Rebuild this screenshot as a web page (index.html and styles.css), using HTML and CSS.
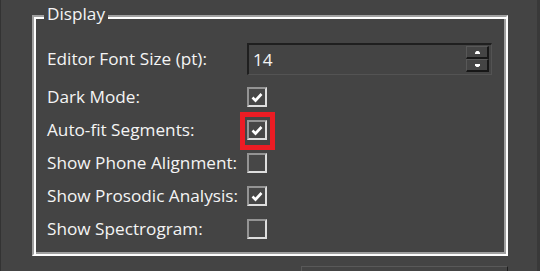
FILE: index.html
```html
<!DOCTYPE html>
<html>
    <head>
        <title> Preferences </title>
        <link rel="stylesheet" href="styles.css">
    </head>
    <body>
        <div class="window">
            <fieldset class="group">
                <legend class="group-title">Display</legend>

                <div class="form">
                    <span class="field-label spin-label">Editor Font Size (pt):</span>
                    <div class="spinbox">
                        <span class="spin-value">14</span>
                        <div class="spin-buttons">
                            <span class="spin-btn">
                                <svg width="5" height="3" viewBox="0 0 5 3"><polygon points="1.5,0 3.5,0 5,1.5 5,3 0,3 0,1.5" fill="#fff"/></svg>
                            </span>
                            <span class="spin-btn">
                                <svg width="5" height="3" viewBox="0 0 5 3"><polygon points="0,0 5,0 5,1.5 3.5,3 1.5,3 0,1.5" fill="#fff"/></svg>
                            </span>
                        </div>
                    </div>

                    <span class="field-label">Dark Mode:</span>
                    <span class="check-cell">
                        <span class="checkbox">
                            <svg width="16" height="16" viewBox="0 0 16 16"><polyline points="3.5,8.5 6.5,11.5 12.5,5" class="tick"/></svg>
                        </span>
                    </span>

                    <span class="field-label">Auto-fit Segments:</span>
                    <span class="check-cell">
                        <span class="checkbox">
                            <svg width="16" height="16" viewBox="0 0 16 16"><polyline points="3.5,8.5 6.5,11.5 12.5,5" class="tick"/></svg>
                        </span>
                        <span class="highlight"></span>
                    </span>

                    <span class="field-label">Show Phone Alignment:</span>
                    <span class="check-cell">
                        <span class="checkbox"></span>
                    </span>

                    <span class="field-label">Show Prosodic Analysis:</span>
                    <span class="check-cell">
                        <span class="checkbox">
                            <svg width="16" height="16" viewBox="0 0 16 16"><polyline points="3.5,8.5 6.5,11.5 12.5,5" class="tick"/></svg>
                        </span>
                    </span>

                    <span class="field-label">Show Spectrogram:</span>
                    <span class="check-cell">
                        <span class="checkbox"></span>
                    </span>
                </div>
            </fieldset>

            <div class="footer">
                <div class="footer-box"></div>
            </div>
        </div>
    </body>
</html>
```

FILE: styles.css
```css
body{
    margin:0;
    background-color:#444444;
    color:#f4f4f4;
    font-family:"Open Sans", "Noto Sans", sans-serif;
    font-size:17.2px;
}

.window{
    box-sizing:border-box;
    width:540px;
    height:271px;
    overflow:hidden;
    padding:3px 0 0 31px;
    background-color:#444444;
    border-left:1px solid #333333;
    border-right:3px solid #393939;
}

.group{
    box-sizing:border-box;
    width:476px;
    margin:0;
    padding:14px 0 9px 0;
    border:2px solid;
    border-color:#a0a0a0 #ffffff #ffffff #a0a0a0;
    box-shadow:inset 2px 2px 0 #ffffff, inset -2px -2px 0 #a0a0a0;
}

.group-title{
    margin-left:10px;
    padding:0 3px 4px 3px;
    line-height:22px;
    background-color:#444444;
}

.form{
    display:grid;
    grid-template-columns:200px 245px;
    grid-template-rows:37px repeat(5, 33px);
    align-items:center;
    padding-left:13px;
}

.spin-label{
    align-self:start;
    line-height:32px;
}

.spinbox{
    align-self:start;
    display:flex;
    box-sizing:border-box;
    width:245px;
    height:32px;
    border-style:solid;
    border-width:2px 1px 1px 2px;
    border-color:#1f1f1f #535353 #535353 #1f1f1f;
}

.spin-value{
    flex:1;
    padding-left:4px;
    line-height:29px;
}

.spin-buttons{
    display:flex;
    flex-direction:column;
    padding:1px 2px 2px 0;
}

.spin-btn{
    display:flex;
    align-items:center;
    justify-content:center;
    box-sizing:border-box;
    width:23px;
    height:13px;
    border-style:solid;
    border-width:1px 2px 2px 1px;
    border-color:#585858 #171717 #171717 #585858;
}

.check-cell{
    position:relative;
    display:flex;
}

.checkbox{
    display:flex;
    align-items:center;
    justify-content:center;
    box-sizing:border-box;
    width:20px;
    height:20px;
    border:2px solid;
    border-color:#949494 #dedede #dedede #949494;
    background-color:#474747;
}

.tick{
    fill:none;
    stroke:#ffffff;
    stroke-width:2.6;
}

/* red annotation box drawn over the auto-fit checkbox */
.highlight{
    position:absolute;
    left:-7px;
    top:-8px;
    box-sizing:border-box;
    width:35px;
    height:38px;
    border:5px solid #ec1c24;
}

.footer{
    display:flex;
    justify-content:flex-end;
    width:476px;
    margin-top:10px;
}

.footer-box{
    box-sizing:border-box;
    width:207px;
    height:30px;
    border-top:1px solid #595959;
    border-left:1px solid #595959;
    border-right:1px solid #1e1e1e;
}
```
